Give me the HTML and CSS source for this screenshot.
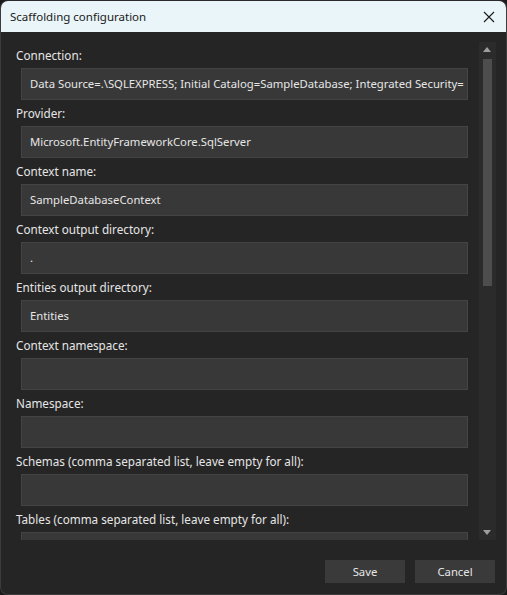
FILE: index.html
```html
<!DOCTYPE html>
<html>
<head>
<meta charset="utf-8">
<link rel="stylesheet" href="styles.css">
</head>
<body>
<div class="window">
  <div class="titlebar">
    <span class="title">Scaffolding configuration</span>
    <svg class="close" width="12" height="12" viewBox="0 0 12 12"><path d="M1 1 L11 11 M11 1 L1 11" stroke="#1a1a1a" stroke-width="1.1" fill="none"/></svg>
  </div>
  <div class="content">
    <div class="scrollarea">
      <div class="form">
        <div class="field"><div class="label">Connection:</div><div class="input">Data Source=.\SQLEXPRESS; Initial Catalog=SampleDatabase; Integrated Security=</div></div>
        <div class="field"><div class="label">Provider:</div><div class="input">Microsoft.EntityFrameworkCore.SqlServer</div></div>
        <div class="field"><div class="label">Context name:</div><div class="input">SampleDatabaseContext</div></div>
        <div class="field"><div class="label">Context output directory:</div><div class="input">.</div></div>
        <div class="field"><div class="label">Entities output directory:</div><div class="input">Entities</div></div>
        <div class="field"><div class="label">Context namespace:</div><div class="input"></div></div>
        <div class="field"><div class="label">Namespace:</div><div class="input"></div></div>
        <div class="field"><div class="label">Schemas (comma separated list, leave empty for all):</div><div class="input"></div></div>
        <div class="field"><div class="label">Tables (comma separated list, leave empty for all):</div><div class="input"></div></div>
      </div>
      <div class="scrollbar">
        <div class="arrow up"></div>
        <div class="track"><div class="thumb"></div></div>
        <div class="arrow down"></div>
      </div>
    </div>
    <div class="buttons">
      <div class="btn">Save</div>
      <div class="btn">Cancel</div>
    </div>
  </div>
</div>
</body>
</html>
```
FILE: styles.css
```css
html, body {
  margin: 0;
  padding: 0;
  background: #1b1b1b;
}
body {
  width: 507px;
  height: 595px;
  overflow: hidden;
  font-family: "Noto Sans", "Open Sans", sans-serif;
  font-size: 11.3px;
}
.window {
  width: 505px;
  height: 593px;
  border: 1px solid #3c3c3c;
  border-top-color: #2a2a2a;
  border-radius: 8px;
  overflow: hidden;
  background: #252525;
  display: flex;
  flex-direction: column;
}
.titlebar {
  height: 31px;
  background: #e9f5f8;
  display: flex;
  align-items: center;
  justify-content: space-between;
  padding: 0 11px 0 9px;
  flex: none;
}
.title {
  color: #1a1a1a;
  font-size: 11.5px;
}
.close {
  display: block;
}
.content {
  flex: 1;
  display: flex;
  flex-direction: column;
  min-height: 0;
}
.scrollarea {
  display: flex;
  height: 498px;
  margin-top: 10px;
  overflow: hidden;
  flex: none;
}
.form {
  flex: 1;
  padding: 2px 0 0 15px;
  display: flex;
  flex-direction: column;
  overflow: hidden;
}
.field {
  display: flex;
  flex-direction: column;
  height: 58px;
  flex: none;
}
.label {
  color: #e6e6e6;
  height: 24px;
  line-height: 22px;
  font-size: 11.7px;
}
.input {
  margin-left: 5px;
  width: 437px;
  height: 30px;
  background: #383838;
  border: 1px solid #444444;
  color: #e6e6e6;
  line-height: 30px;
  padding-left: 8px;
  white-space: nowrap;
  overflow: hidden;
  box-sizing: content-box;
}
.scrollbar {
  width: 17px;
  margin: 0 10px 0 10px;
  background: #2b2b2b;
  display: flex;
  flex-direction: column;
  align-items: center;
}
.arrow {
  height: 17px;
  width: 17px;
  position: relative;
  flex: none;
}
.arrow.up::after, .arrow.down::after {
  content: "";
  position: absolute;
  left: 4px;
  width: 0;
  height: 0;
  border-left: 4.5px solid transparent;
  border-right: 4.5px solid transparent;
}
.arrow.up::after {
  top: 5px;
  border-bottom: 5px solid #9e9e9e;
}
.arrow.down::after {
  top: 7px;
  border-top: 5px solid #9e9e9e;
}
.track {
  flex: 1;
  width: 9px;
}
.thumb {
  width: 9px;
  height: 227px;
  background: #4d4d4d;
}
.buttons {
  display: flex;
  justify-content: flex-end;
  gap: 10px;
  padding: 20px 11px 0 0;
}
.btn {
  width: 80px;
  height: 23px;
  background: #3a3a3a;
  color: #e6e6e6;
  display: flex;
  align-items: center;
  justify-content: center;
}
```
